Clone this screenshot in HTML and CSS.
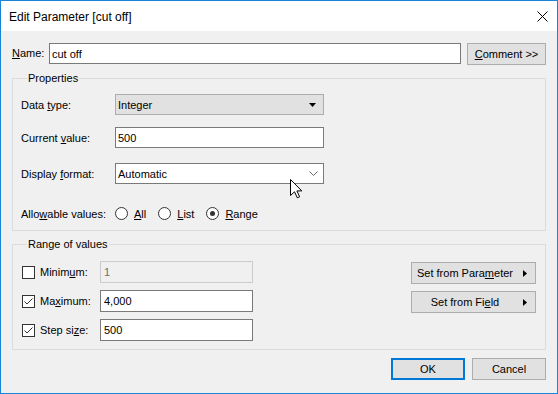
FILE: index.html
```html
<!DOCTYPE html>
<html lang="en">
<head>
    <meta charset="UTF-8">
    <meta name="viewport" content="width=device-width, initial-scale=1.0">
    <title>Edit Parameter [cut off]</title>
    <link rel="stylesheet" href="styles.css">
</head>
<body>
    <div class="window">
        <div class="titlebar">
            <span class="title">Edit Parameter [cut off]</span>
            <svg class="close" width="11" height="11" viewBox="0 0 11 11">
                <path d="M0.5 0.5 L10.5 10.5 M10.5 0.5 L0.5 10.5" stroke="#000" stroke-width="1" fill="none"/>
            </svg>
        </div>

        <div class="content">
            <div class="name-row">
                <span class="name-label"><u>N</u>ame:</span>
                <div class="textbox name-box">cut off</div>
                <button class="btn comment-btn"><u>C</u>omment &gt;&gt;</button>
            </div>

            <fieldset class="group props">
                <legend>Properties</legend>
                <div class="field-row row-type">
                    <span class="field-label">Data <u>t</u>ype:</span>
                    <div class="combo combo-grey">
                        <span>Integer</span>
                        <svg width="7" height="4" viewBox="0 0 7 4"><path d="M0 0 H7 L3.5 4 Z" fill="#000"/></svg>
                    </div>
                </div>
                <div class="field-row row-current">
                    <span class="field-label">Current <u>v</u>alue:</span>
                    <div class="textbox combo">500</div>
                </div>
                <div class="field-row row-format">
                    <span class="field-label">Display <u>f</u>ormat:</span>
                    <div class="combo combo-white">
                        <span>Automatic</span>
                        <svg width="9" height="5" viewBox="0 0 9 5"><path d="M0.5 0.5 L4.5 4.5 L8.5 0.5" stroke="#6a6a6a" fill="none"/></svg>
                    </div>
                </div>
                <div class="field-row row-allow">
                    <span class="field-label allow-label">Allo<u>w</u>able values:</span>
                    <label class="radio"><span class="dot"></span><u>A</u>ll</label>
                    <label class="radio"><span class="dot"></span><u>L</u>ist</label>
                    <label class="radio"><span class="dot on"></span><u>R</u>ange</label>
                </div>
            </fieldset>

            <fieldset class="group range">
                <legend>Range of values</legend>
                <div class="range-row">
                    <span class="check"></span>
                    <span class="range-label">Minim<u>u</u>m:</span>
                    <div class="textbox range-box disabled">1</div>
                    <button class="btn set-btn">Set from Para<u>m</u>eter
                        <svg width="4" height="7" viewBox="0 0 4 7"><path d="M0 0 L4 3.5 L0 7 Z" fill="#000"/></svg>
                    </button>
                </div>
                <div class="range-row">
                    <span class="check checked">
                        <svg width="11" height="11" viewBox="0 0 11 11"><path d="M1.5 5.5 L4 8 L9.5 2.5" stroke="#333" fill="none"/></svg>
                    </span>
                    <span class="range-label">Ma<u>x</u>imum:</span>
                    <div class="textbox range-box">4,000</div>
                    <button class="btn set-btn">Set from Fi<u>e</u>ld
                        <svg width="4" height="7" viewBox="0 0 4 7"><path d="M0 0 L4 3.5 L0 7 Z" fill="#000"/></svg>
                    </button>
                </div>
                <div class="range-row">
                    <span class="check checked">
                        <svg width="11" height="11" viewBox="0 0 11 11"><path d="M1.5 5.5 L4 8 L9.5 2.5" stroke="#333" fill="none"/></svg>
                    </span>
                    <span class="range-label">Step si<u>z</u>e:</span>
                    <div class="textbox range-box">500</div>
                </div>
            </fieldset>

            <div class="footer">
                <button class="btn dialog-btn default">OK</button>
                <button class="btn dialog-btn">Cancel</button>
            </div>
        </div>

        <!-- mouse pointer resting over the format box -->
        <svg class="pointer" width="13" height="20" viewBox="0 0 13 20">
            <path d="M0.5 0.5 L0.5 16.5 L4.5 12.8 L7.3 18.8 L9.6 17.8 L6.9 11.9 L11.8 11.9 Z" fill="#fff" stroke="#000" stroke-width="1" stroke-linejoin="miter"/>
        </svg>
    </div>
</body>
</html>
```

FILE: styles.css
```css
body {
    margin: 0;
    font-family: "Liberation Sans", Arial, sans-serif;
    font-size: 11px;
    color: #000;
    background-color: #f0f0f0;
}

u {
    text-decoration-thickness: 1px;
    text-underline-offset: 1px;
}

.window {
    position: relative;
    width: 558px;
    height: 394px;
    box-sizing: border-box;
    border: 1px solid #1883d7;
    background-color: #f0f0f0;
    display: flex;
    flex-direction: column;
}

.titlebar {
    height: 30px;
    flex-shrink: 0;
    background-color: #fff;
    display: flex;
    align-items: center;
    justify-content: space-between;
    padding: 1px 9px 0 8px;
    box-sizing: border-box;
}

.title {
    font-size: 12px;
    line-height: 14px;
}

.content {
    padding: 12px 11px 0 11px;
    display: flex;
    flex-direction: column;
}

/* name row */
.name-row {
    display: flex;
    align-items: flex-start;
    height: 22px;
}

.name-label {
    width: 37px;
    line-height: 21px;
}

.textbox {
    height: 21px;
    box-sizing: border-box;
    border: 1px solid #7a7a7a;
    background-color: #fff;
    padding: 0 2px;
    display: flex;
    align-items: center;
}

.name-box {
    width: 412px;
}

.btn {
    font-family: inherit;
    font-size: 11px;
    color: #000;
    height: 22px;
    box-sizing: border-box;
    border: 1px solid #adadad;
    background-color: #e1e1e1;
    padding: 0;
    margin: 0;
}

.comment-btn {
    width: 79px;
    margin-left: 6px;
}

/* group boxes */
.group {
    margin: 7px 0 0 0;
    padding: 0 8px;
    border: 1px solid #dcdcdc;
    min-width: 0;
}

.group legend {
    padding: 0 1px;
    margin-left: 6px;
    line-height: 13px;
}

.field-row {
    display: flex;
    align-items: center;
    height: 21px;
}

.field-label {
    width: 94px;
    flex-shrink: 0;
}

.row-type {
    margin-top: 9px;
}

.row-current {
    margin-top: 12px;
}

.row-format {
    margin-top: 15px;
}

.row-allow {
    margin-top: 19px;
    margin-bottom: 6px;
}

.combo {
    width: 209px;
    height: 21px;
    box-sizing: border-box;
    padding: 0 7px 0 2px;
    display: flex;
    align-items: center;
    justify-content: space-between;
}

.combo-grey {
    background-color: #e1e1e1;
    border: 1px solid #adadad;
}

.combo-white {
    background-color: #fff;
    border: 1px solid #7a7a7a;
    padding-right: 5px;
}

.allow-label {
    width: auto;
    margin-right: 9px;
}

.radio {
    display: flex;
    align-items: center;
    margin-right: 12px;
}

.dot {
    width: 13px;
    height: 13px;
    box-sizing: border-box;
    border: 1px solid #333;
    border-radius: 50%;
    background-color: #fff;
    margin-right: 6px;
    display: flex;
    align-items: center;
    justify-content: center;
}

.dot.on::after {
    content: "";
    width: 5px;
    height: 5px;
    border-radius: 50%;
    background-color: #333;
}

/* range of values */
.range {
    padding-bottom: 8px;
}

.range-row {
    display: flex;
    align-items: center;
    height: 22px;
    margin-top: 7px;
}

.range-row:first-of-type {
    margin-top: 10px;
}

.check {
    width: 13px;
    height: 13px;
    box-sizing: border-box;
    border: 1px solid #333;
    background-color: #fff;
    margin-left: 1px;
    display: flex;
}

.range-label {
    width: 60px;
    margin-left: 5px;
}

.range-box {
    width: 153px;
    height: 22px;
    padding-left: 3px;
}

.range-box.disabled {
    background-color: #f0f0f0;
    border-color: #cccccc;
    color: #6d6d6d;
}

.set-btn {
    width: 125px;
    margin-left: auto;
    margin-right: 1px;
    margin-top: 2px;
    display: flex;
    align-items: center;
    justify-content: center;
    position: relative;
    padding-right: 17px;
}

.set-btn svg {
    position: absolute;
    right: 8px;
    top: 7px;
}

/* footer */
.footer {
    display: flex;
    justify-content: flex-end;
    gap: 7px;
    margin-top: 8px;
}

.dialog-btn {
    width: 74px;
}

.dialog-btn.default {
    border: 2px solid #0078d7;
}

.pointer {
    position: absolute;
    left: 289px;
    top: 178px;
}
```
